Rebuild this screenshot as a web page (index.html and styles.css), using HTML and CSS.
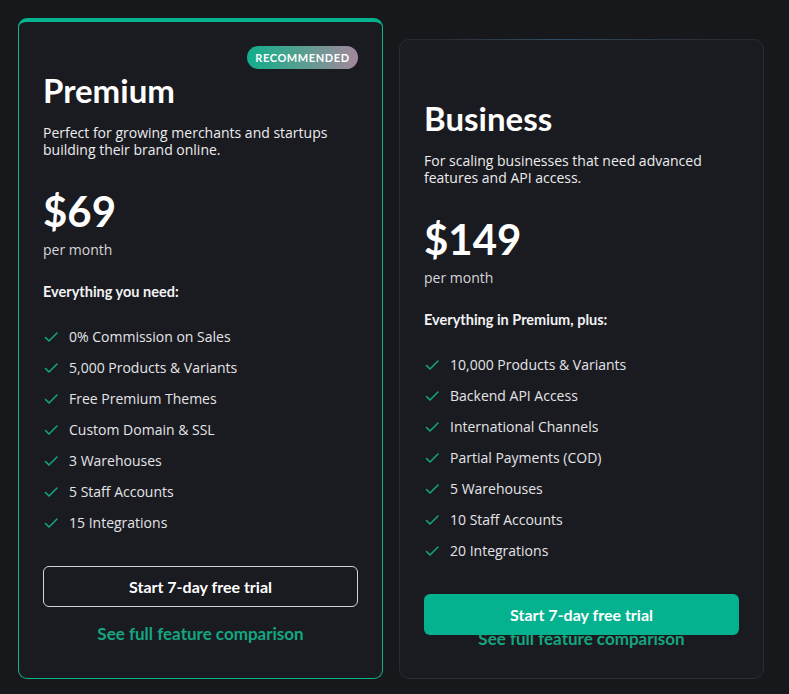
FILE: index.html
```html
<!DOCTYPE html>
<html lang="en">
<head>
<meta charset="utf-8">
<title>Pricing</title>
<link rel="stylesheet" href="styles.css">
</head>
<body>
<div class="plans">
  <section class="card card-featured">
    <div class="badge-row"><span class="badge">RECOMMENDED</span></div>
    <h2 class="plan-name">Premium</h2>
    <p class="plan-desc">Perfect for growing merchants and startups building their brand online.</p>
    <div class="price">$69</div>
    <div class="period">per month</div>
    <h3 class="features-title">Everything you need:</h3>
    <ul class="features">
      <li><svg class="check" viewBox="0 0 16 16"><path d="M2.5 8.5 L6 12 L14 4"/></svg>0% Commission on Sales</li>
      <li><svg class="check" viewBox="0 0 16 16"><path d="M2.5 8.5 L6 12 L14 4"/></svg>5,000 Products &amp; Variants</li>
      <li><svg class="check" viewBox="0 0 16 16"><path d="M2.5 8.5 L6 12 L14 4"/></svg>Free Premium Themes</li>
      <li><svg class="check" viewBox="0 0 16 16"><path d="M2.5 8.5 L6 12 L14 4"/></svg>Custom Domain &amp; SSL</li>
      <li><svg class="check" viewBox="0 0 16 16"><path d="M2.5 8.5 L6 12 L14 4"/></svg>3 Warehouses</li>
      <li><svg class="check" viewBox="0 0 16 16"><path d="M2.5 8.5 L6 12 L14 4"/></svg>5 Staff Accounts</li>
      <li><svg class="check" viewBox="0 0 16 16"><path d="M2.5 8.5 L6 12 L14 4"/></svg>15 Integrations</li>
    </ul>
    <button class="btn btn-outline">Start 7-day free trial</button>
    <a class="compare" href="#">See full feature comparison</a>
  </section>

  <section class="card card-plain">
    <h2 class="plan-name">Business</h2>
    <p class="plan-desc">For scaling businesses that need advanced features and API access.</p>
    <div class="price">$149</div>
    <div class="period">per month</div>
    <h3 class="features-title">Everything in Premium, plus:</h3>
    <ul class="features">
      <li><svg class="check" viewBox="0 0 16 16"><path d="M2.5 8.5 L6 12 L14 4"/></svg>10,000 Products &amp; Variants</li>
      <li><svg class="check" viewBox="0 0 16 16"><path d="M2.5 8.5 L6 12 L14 4"/></svg>Backend API Access</li>
      <li><svg class="check" viewBox="0 0 16 16"><path d="M2.5 8.5 L6 12 L14 4"/></svg>International Channels</li>
      <li><svg class="check" viewBox="0 0 16 16"><path d="M2.5 8.5 L6 12 L14 4"/></svg>Partial Payments (COD)</li>
      <li><svg class="check" viewBox="0 0 16 16"><path d="M2.5 8.5 L6 12 L14 4"/></svg>5 Warehouses</li>
      <li><svg class="check" viewBox="0 0 16 16"><path d="M2.5 8.5 L6 12 L14 4"/></svg>10 Staff Accounts</li>
      <li><svg class="check" viewBox="0 0 16 16"><path d="M2.5 8.5 L6 12 L14 4"/></svg>20 Integrations</li>
    </ul>
    <button class="btn btn-solid">Start 7-day free trial</button>
    <a class="compare compare-under" href="#">See full feature comparison</a>
  </section>
</div>
</body>
</html>
```

FILE: styles.css
```css
* { box-sizing: border-box; }

html, body {
  margin: 0;
  padding: 0;
  background: #17181c;
  height: 100%;
}

body {
  font-family: "Open Sans", "DejaVu Sans", sans-serif;
  color: #e8e8ea;
}

.plans {
  display: flex;
  align-items: flex-end;
  gap: 16px;
  padding: 18px 0 0 18px;
}

.card {
  position: relative;
  width: 365px;
  display: flex;
  flex-direction: column;
  background: #1a1b20;
  border-radius: 10px;
  padding: 24px 24px 34px;
}

.card-featured {
  border: 1px solid #0eb28c;
  border-top: 4px solid #05b28e;
  border-radius: 9px;
}

.card-featured .plan-name {
  margin-top: 2px;
}

.card-plain {
  border: 1px solid #2a2b31;
  padding-top: 59px;
  padding-bottom: 29px;
}

.card-plain::before {
  content: "";
  position: absolute;
  top: -1px;
  left: 40px;
  right: 40px;
  height: 1px;
  background: linear-gradient(90deg, rgba(40,70,95,0) 0%, rgba(48,80,105,0.9) 40%, rgba(40,70,95,0) 100%);
}

.badge-row {
  display: flex;
  justify-content: flex-end;
  height: 23px;
}

.badge {
  display: inline-flex;
  align-items: center;
  justify-content: center;
  height: 23px;
  width: 111px;
  border-radius: 12px;
  background: linear-gradient(90deg, #10ae8c 0%, #52a08f 45%, #a3879c 100%);
  color: #ffffff;
  font-family: "Lato", "Inter", sans-serif;
  font-weight: 700;
  font-size: 11px;
  letter-spacing: 0.6px;
}

.plan-name {
  margin: 0;
  font-family: "Lato", "Inter", sans-serif;
  font-weight: 700;
  font-size: 33px;
  line-height: 38px;
  color: #ffffff;
}

.plan-desc {
  margin: 15px 0 0;
  font-size: 14px;
  line-height: 17px;
  color: #ececee;
}

.price {
  margin-top: 32px;
  font-family: "Lato", "Inter", sans-serif;
  font-weight: 700;
  font-size: 42px;
  line-height: 42px;
  color: #ffffff;
}

.period {
  margin-top: 8px;
  font-size: 14px;
  line-height: 20px;
  color: #d6d6da;
}

.features-title {
  margin: 22px 0 0;
  font-family: "Lato", "Inter", sans-serif;
  font-weight: 700;
  font-size: 14.5px;
  line-height: 20px;
  color: #f2f2f4;
}

.features {
  list-style: none;
  margin: 25px 0 0;
  padding: 0;
  display: flex;
  flex-direction: column;
  gap: 11px;
}

.features li {
  display: flex;
  align-items: center;
  gap: 10px;
  font-size: 14px;
  line-height: 20px;
  color: #e4e4e8;
}

.check {
  width: 16px;
  height: 16px;
  flex: none;
  fill: none;
  stroke: #12a883;
  stroke-width: 1.5;
  stroke-linecap: round;
  stroke-linejoin: round;
}

.btn {
  position: relative;
  z-index: 1;
  margin-top: 33px;
  height: 41px;
  border-radius: 6px;
  font-family: "Lato", "Inter", sans-serif;
  font-weight: 700;
  font-size: 16px;
  color: #ffffff;
  cursor: pointer;
}

.btn-outline {
  background: transparent;
  border: 1px solid #d4d4d8;
}

.btn-solid {
  background: #05b28f;
  border: none;
}

.compare {
  margin-top: 17px;
  text-align: center;
  font-family: "Lato", "Inter", sans-serif;
  font-weight: 700;
  font-size: 17px;
  line-height: 20px;
  color: #13a680;
  text-decoration: none;
}

.compare-under {
  margin-top: -6px;
}
```
